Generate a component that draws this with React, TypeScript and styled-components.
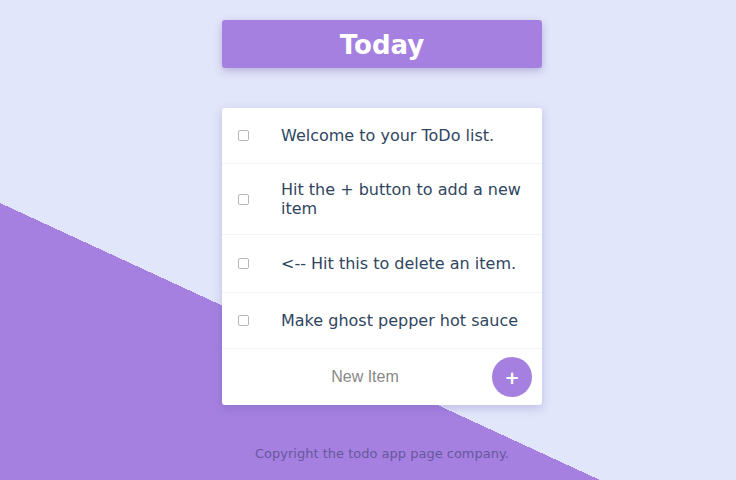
import React from "react";
import styled, { createGlobalStyle } from "styled-components";

const Global = createGlobalStyle`
  html, body { margin: 0; padding: 0; }
  body {
    min-height: 480px;
    background-color: #e2e6fa;
    background-image: linear-gradient(to top right, #a580e0 50%, transparent 50%);
    background-size: 600px 277px;
    background-position: left bottom;
    background-repeat: no-repeat;
    font-family: "DejaVu Sans", Verdana, sans-serif;
  }
`;

const Page = styled.div`
  width: 320px;
  margin-left: 222px;
  padding-top: 20px;
  display: flex;
  flex-direction: column;
`;

const Header = styled.h1`
  margin: 0;
  height: 48px;
  display: flex;
  align-items: center;
  justify-content: center;
  padding-top: 2px;
  box-sizing: border-box;
  background: #a580e0;
  color: #fff;
  font-size: 26px;
  font-weight: bold;
  border-radius: 3px;
  box-shadow: 0 3px 8px rgba(80, 60, 140, 0.3);
`;

const Card = styled.div`
  margin-top: 40px;
  background: #fff;
  border-radius: 3px;
  box-shadow: 0 3px 10px rgba(80, 70, 150, 0.25);
  display: flex;
  flex-direction: column;
`;

const Row = styled.div<{ $tall?: boolean }>`
  display: flex;
  align-items: center;
  min-height: ${(p) => (p.$tall ? 58 : 56)}px;
  box-sizing: border-box;
  padding: 16px;
  border-bottom: 1px solid #f3f3f5;
`;

const Check = styled.input`
  appearance: none;
  width: 11px;
  height: 11px;
  margin: 0;
  border: 1px solid #b8b8b8;
  border-radius: 2px;
  background: #fff;
  flex: none;
`;

const Label = styled.span`
  margin-left: 32px;
  font-size: 16px;
  line-height: 19px;
  color: #2f4560;
`;

const InputRow = styled.div`
  display: flex;
  align-items: center;
  height: 56px;
  padding: 0 10px 0 16px;
`;

const NewInput = styled.input`
  flex: 1;
  min-width: 0;
  border: none;
  outline: none;
  background: transparent;
  text-align: center;
  font-family: "Liberation Sans", Arial, sans-serif;
  font-size: 16px;
  color: #333;
  &::placeholder { color: #888; }
`;

const AddButton = styled.button`
  width: 40px;
  height: 40px;
  border-radius: 50%;
  border: none;
  background: #a580e0;
  color: #fff;
  font-family: "DejaVu Sans", sans-serif;
  font-size: 18px;
  font-weight: bold;
  display: flex;
  align-items: center;
  justify-content: center;
  padding: 0;
  flex: none;
`;

const Footer = styled.p`
  margin: 41px 0 0;
  text-align: center;
  font-size: 13px;
  color: #67589e;
`;

const items = [
  { text: "Welcome to your ToDo list." },
  { text: "Hit the + button to add a new item" },
  { text: "<-- Hit this to delete an item.", tall: true },
  { text: "Make ghost pepper hot sauce" },
];

export default function App() {
  return (
    <>
      <Global />
      <Page>
        <Header>Today</Header>
        <Card>
          {items.map((it) => (
            <Row key={it.text} $tall={it.tall}>
              <Check type="checkbox" />
              <Label>{it.text}</Label>
            </Row>
          ))}
          <InputRow>
            <NewInput placeholder="New Item" />
            <AddButton>+</AddButton>
          </InputRow>
        </Card>
        <Footer>Copyright the todo app page company.</Footer>
      </Page>
    </>
  );
}
